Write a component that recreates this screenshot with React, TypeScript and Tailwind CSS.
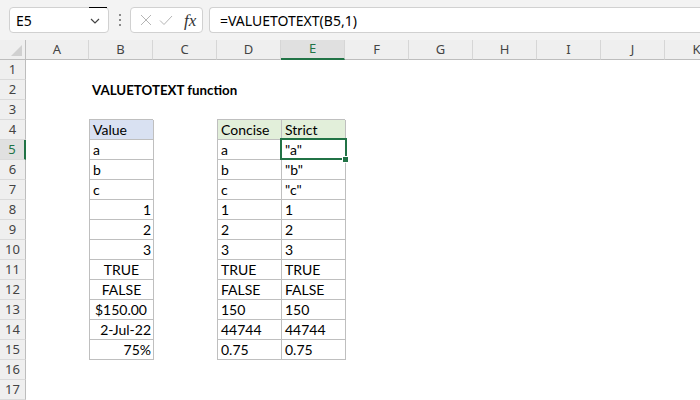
import React from "react";

type Align = "left" | "right" | "center";

type CellData = { text: string; align?: Align; padRight?: boolean };

const COLS = ["A", "B", "C", "D", "E", "F", "G", "H", "I", "J", "K"];
const ROWS = Array.from({ length: 17 }, (_, i) => i + 1);

// values for the two little tables, keyed by row number
const valueCol: Record<number, CellData> = {
  4: { text: "Value" },
  5: { text: "a" },
  6: { text: "b" },
  7: { text: "c" },
  8: { text: "1", align: "right" },
  9: { text: "2", align: "right" },
  10: { text: "3", align: "right" },
  11: { text: "TRUE", align: "center" },
  12: { text: "FALSE", align: "center" },
  13: { text: "$150.00", align: "right", padRight: true },
  14: { text: "2-Jul-22", align: "right" },
  15: { text: "75%", align: "right" },
};

const concise = ["Concise", "a", "b", "c", "1", "2", "3", "TRUE", "FALSE", "150", "44744", "0.75"];
const strict = ["Strict", '"a"', '"b"', '"c"', "1", "2", "3", "TRUE", "FALSE", "150", "44744", "0.75"];

const uiFont = "font-['Noto_Sans','Open_Sans',sans-serif]";
const cellFont = "font-['Lato','Liberation_Sans',sans-serif]";

function cellContent(row: number, col: string): CellData | null {
  if (row === 2 && col === "B") return { text: "VALUETOTEXT function" };
  if (col === "B") return valueCol[row] ?? null;
  if (row >= 4 && row <= 15) {
    if (col === "D") return { text: concise[row - 4] };
    if (col === "E") return { text: strict[row - 4] };
  }
  return null;
}

function Cell({ row, col }: { row: number; col: string }) {
  const data = cellContent(row, col);
  const inTable = row >= 4 && row <= 15;
  const tableCol = col === "B" || col === "D" || col === "E";
  const leftLine = inTable && ["B", "C", "D", "E", "F"].includes(col);
  const bottomLine = (inTable || row === 3) && tableCol;

  let bg = "";
  if (row === 4 && col === "B") bg = "bg-[#d9e1f2]";
  if (row === 4 && (col === "D" || col === "E")) bg = "bg-[#e2efda]";

  const align = data?.align ?? "left";
  const justify = align === "right" ? "justify-end" : align === "center" ? "justify-center" : "justify-start";
  const selected = row === 5 && col === "E";

  return (
    <div
      className={`relative h-[20px] flex items-end overflow-visible whitespace-nowrap ${bg} ${justify} ${
        leftLine ? "border-l border-[#bfbfbf]" : ""
      } ${bottomLine ? "border-b border-[#bfbfbf]" : ""}`}
    >
      {data && (
        <span
          className={`leading-[19px] text-black ${cellFont} ${row === 2 ? "font-bold text-[13.3px]" : "text-[14px]"} ${
            align === "left" ? "pl-[3px]" : align === "right" ? (data.padRight ? "pr-[6px]" : "pr-[2px]") : ""
          }`}
        >
          {data.text}
        </span>
      )}
      {selected && (
        <>
          <div className="absolute z-10 left-[-2px] top-[-2px] w-[67px] h-[22px] border-2 border-[#217346] pointer-events-none" />
          <div className="absolute z-20 right-[-4px] bottom-[-4px] w-[7px] h-[7px] bg-[#217346] border border-white" />
        </>
      )}
    </div>
  );
}

function FormulaBar() {
  return (
    <div className="h-[40px] bg-[#f3f3f3] flex items-start pt-[7px] pl-[9px] gap-0">
      {/* name box */}
      <div className="relative w-[100px] h-[26px] bg-white border border-[#d1d1d1] rounded-[4px] flex items-center pl-[6px]">
        <span className={`text-[14px] text-black ${uiFont}`}>E5</span>
        <div className="absolute right-[1px] top-[-1px] w-[18px] h-[1px] bg-black" />
        <svg className="absolute right-[8px] top-[10px]" width="10" height="6" viewBox="0 0 10 6">
          <path d="M1 1 L5 5 L9 1" fill="none" stroke="#444" strokeWidth="1.2" />
        </svg>
      </div>
      {/* separator dots */}
      <div className="w-[21px] h-[26px] flex flex-col items-center justify-center gap-[3px]">
        <div className="w-[2px] h-[2px] bg-[#8a8a8a]" />
        <div className="w-[2px] h-[2px] bg-[#8a8a8a]" />
        <div className="w-[2px] h-[2px] bg-[#8a8a8a]" />
      </div>
      {/* cancel / enter / fx */}
      <div className="w-[73px] h-[26px] bg-white border border-[#d1d1d1] rounded-[4px] flex items-center pl-[9px] gap-[7px]">
        <svg width="12" height="12" viewBox="0 0 12 12">
          <path d="M1 1 L11 11 M11 1 L1 11" stroke="#b5b5b5" strokeWidth="1" fill="none" />
        </svg>
        <svg width="14" height="11" viewBox="0 0 14 11">
          <path d="M1 5.5 L5 9.5 L13 1" stroke="#b5b5b5" strokeWidth="1" fill="none" />
        </svg>
        <span className="ml-[4px] text-[17px] leading-none italic text-[#333] font-['Liberation_Serif',serif]">fx</span>
      </div>
      {/* formula input */}
      <div className="ml-[6px] flex-1 h-[26px] bg-white border border-r-0 border-[#d1d1d1] rounded-l-[4px] flex items-center pl-[10px]">
        <span className={`text-[14px] text-black ${uiFont}`}>=VALUETOTEXT(B5,1)</span>
      </div>
    </div>
  );
}

export default function App() {
  return (
    <div className="w-[700px] h-[400px] overflow-hidden bg-white">
      <FormulaBar />
      <div className="grid grid-cols-[26px_63px_64px_64px_64px_64px_64px_64px_64px_64px_64px_64px] w-[729px] bg-white">
        {/* header row */}
        <div className="relative h-[20px] bg-[#efefef] border-b border-r border-[#bdbdbd]">
          <svg className="absolute right-[3px] bottom-[3px]" width="11" height="11" viewBox="0 0 11 11">
            <polygon points="11,0 11,11 0,11" fill="#d0d0d0" />
          </svg>
        </div>
        {COLS.map((c) => (
          <div
            key={c}
            className={`h-[20px] flex items-center justify-center text-[13px] ${uiFont} ${
              c === "E"
                ? "bg-[#e0e0e0] text-[#217346] border-b-2 border-[#217346]"
                : "bg-[#efefef] text-[#444] border-b border-[#bdbdbd]"
            } border-r border-r-[#d6d6d6]`}
          >
            {c}
          </div>
        ))}
        {ROWS.map((r) => (
          <React.Fragment key={r}>
            <div
              className={`h-[20px] flex items-center justify-center text-[13px] ${uiFont} border-b border-b-[#dadada] ${
                r === 5
                  ? "bg-[#e0e0e0] text-[#217346] border-r-2 border-r-[#217346]"
                  : "bg-[#efefef] text-[#444] border-r border-r-[#bdbdbd]"
              }`}
            >
              {r}
            </div>
            {COLS.map((c) => (
              <Cell key={c} row={r} col={c} />
            ))}
          </React.Fragment>
        ))}
      </div>
    </div>
  );
}
